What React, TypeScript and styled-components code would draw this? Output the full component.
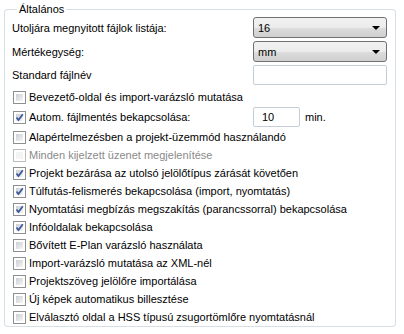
import React from 'react';
import styled, { createGlobalStyle } from 'styled-components';

const GlobalStyle = createGlobalStyle`
  html, body {
    margin: 0;
    padding: 0;
    background: #ffffff;
  }
  body {
    font-family: 'Liberation Sans', Arial, sans-serif;
    font-size: 11px;
    color: #000000;
  }
`;

const Page = styled.div`
  width: 404px;
  height: 334px;
  box-sizing: border-box;
  padding: 3px 8px 0 4px;
  background: #ffffff;
`;

const GroupBox = styled.fieldset`
  margin: 0;
  height: 324px;
  box-sizing: border-box;
  border: 1px solid #d5dfe5;
  border-radius: 3px;
  padding: 1px 8px 0 7px;
  display: flex;
  flex-direction: column;
`;

const Legend = styled.legend`
  margin-left: 5px;
  padding: 0 2px;
  line-height: 13px;
  font-size: 11px;
`;

const FieldRow = styled.div`
  display: grid;
  grid-template-columns: 1fr 134px;
  align-items: center;
  margin-bottom: 3px;
`;

const Combo = styled.div`
  height: 21px;
  box-sizing: border-box;
  border: 1px solid #707070;
  border-radius: 3px;
  background: linear-gradient(#f2f2f2 0%, #ebebeb 50%, #dddddd 51%, #cfcfcf 100%);
  display: flex;
  align-items: center;
  justify-content: space-between;
  padding: 0 6px 0 4px;
`;

const Arrow = styled.span`
  width: 0;
  height: 0;
  border-left: 4px solid transparent;
  border-right: 4px solid transparent;
  border-top: 4px solid #000;
`;

const TextBox = styled.div<{ $w?: number }>`
  width: ${p => (p.$w ? `${p.$w}px` : 'auto')};
  height: 20px;
  box-sizing: border-box;
  border: 1px solid #c5ced8;
  border-radius: 2px;
  background: #ffffff;
  display: flex;
  align-items: center;
  padding-left: 8px;
`;

const CheckRow = styled.div<{ $h?: number }>`
  display: grid;
  grid-template-columns: 13px auto;
  column-gap: 3px;
  align-items: center;
  height: ${p => p.$h ?? 18}px;
  padding-left: 1px;
`;

const CheckLine = styled.div`
  display: grid;
  grid-template-columns: 13px 221px 47px auto;
  column-gap: 3px;
  align-items: center;
  height: 22px;
  padding-left: 1px;
`;

const Box = styled.span<{ $disabled?: boolean }>`
  width: 13px;
  height: 13px;
  box-sizing: border-box;
  border: 1px solid ${p => (p.$disabled ? '#bcbcbc' : '#8e8f8f')};
  background: #ffffff;
  padding: 2px;
  display: flex;
`;

const BoxInner = styled.span<{ $disabled?: boolean }>`
  flex: 1;
  background: ${p =>
    p.$disabled
      ? '#f4f4f4'
      : 'linear-gradient(135deg, #cbcfd5 0%, #e4e5e7 60%, #f6f6f6 100%)'};
  display: flex;
  align-items: center;
  justify-content: center;
  position: relative;
`;

const Mark = styled.svg`
  width: 9px;
  height: 9px;
  position: absolute;
  left: -1px;
  top: -1px;
`;

const Label = styled.span<{ $disabled?: boolean }>`
  color: ${p => (p.$disabled ? '#8a8a8a' : '#000')};
  white-space: nowrap;
`;

const Unit = styled.span`
  margin-left: 2px;
`;

function CheckBox({ checked, disabled }: { checked?: boolean; disabled?: boolean }) {
  return (
    <Box $disabled={disabled}>
      <BoxInner $disabled={disabled}>
        {checked && (
          <Mark viewBox="0 0 9 9">
            <path d="M1.5 4.5 L3.5 7 L7.8 1.2" fill="none" stroke="#3c5a9a" strokeWidth="1.8" />
          </Mark>
        )}
      </BoxInner>
    </Box>
  );
}

const options: { text: string; checked?: boolean; disabled?: boolean }[] = [
  { text: 'Alapértelmezésben a projekt-üzemmód használandó' },
  { text: 'Minden kijelzett üzenet megjelenítése', disabled: true },
  { text: 'Projekt bezárása az utolsó jelölőtípus zárását követően', checked: true },
  { text: 'Túlfutás-felismerés bekapcsolása (import, nyomtatás)', checked: true },
  { text: 'Nyomtatási megbízás megszakítás (parancssorral) bekapcsolása', checked: true },
  { text: 'Infóoldalak bekapcsolása', checked: true },
  { text: 'Bővített E-Plan varázsló használata' },
  { text: 'Import-varázsló mutatása az XML-nél' },
  { text: 'Projektszöveg jelölőre importálása' },
  { text: 'Új képek automatikus billesztése' },
  { text: 'Elválasztó oldal a HSS típusú zsugortömlőre nyomtatásnál' },
];

export default function App() {
  return (
    <Page>
      <GlobalStyle />
      <GroupBox>
        <Legend>Általános</Legend>
        <FieldRow>
          <Label>Utoljára megnyitott fájlok listája:</Label>
          <Combo>
            <span>16</span>
            <Arrow />
          </Combo>
        </FieldRow>
        <FieldRow>
          <Label>Mértékegység:</Label>
          <Combo>
            <span>mm</span>
            <Arrow />
          </Combo>
        </FieldRow>
        <FieldRow>
          <Label>Standard fájlnév</Label>
          <TextBox />
        </FieldRow>
        <CheckRow>
          <CheckBox />
          <Label>Bevezető-oldal és import-varázsló mutatása</Label>
        </CheckRow>
        <CheckLine>
          <CheckBox checked />
          <Label>Autom. fájlmentés bekapcsolása:</Label>
          <TextBox $w={47}>10</TextBox>
          <Unit>min.</Unit>
        </CheckLine>
        {options.map(o => (
          <CheckRow key={o.text}>
            <CheckBox checked={o.checked} disabled={o.disabled} />
            <Label $disabled={o.disabled}>{o.text}</Label>
          </CheckRow>
        ))}
      </GroupBox>
    </Page>
  );
}
